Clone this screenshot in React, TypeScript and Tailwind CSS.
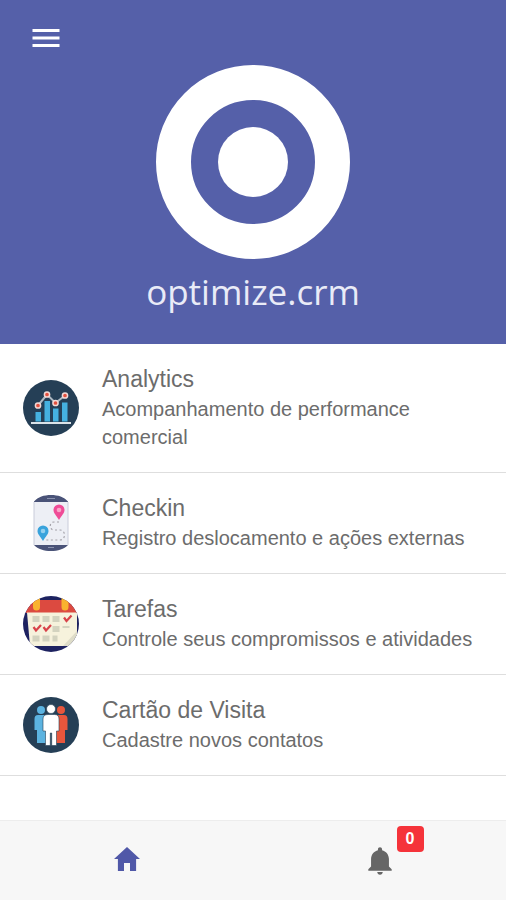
import React from "react";
import { IoMdHome, IoMdMenu, IoMdNotifications } from "react-icons/io";

function TargetLogo() {
  return (
    <svg viewBox="0 0 194 194" className="size-[194px]" aria-hidden="true">
      <circle cx="97" cy="97" r="79.5" fill="none" stroke="#fff" strokeWidth="35" />
      <circle cx="97" cy="97" r="35" fill="#fff" />
    </svg>
  );
}

function AnalyticsIcon() {
  return (
    <svg viewBox="0 0 56 56" className="size-14" aria-hidden="true">
      <circle cx="28" cy="28" r="28" fill="#253f56" />
      <path d="M12.500 32h5.500v9.500h-5.500zM21.500 21h5.500v20.500h-5.500zM30 28.500h5.500v13H30zM39 22.500h5.500v19H39z" fill="#45b1e0" />
      <path d="M8 42h40v2H8z" fill="#dbe3e9" />
      <path d="m15 25.500 9-11 8.500 8.500L42 15.500" fill="none" stroke="#aeb9c3" strokeWidth="2" />
      <g fill="#e2503f" stroke="#f3d9d6" strokeWidth="1.500">
        <circle cx="15" cy="25.500" r="2.600" />
        <circle cx="24" cy="14.500" r="2.600" />
        <circle cx="32.500" cy="23" r="2.600" />
        <circle cx="42" cy="15.500" r="2.600" />
      </g>
    </svg>
  );
}

function CheckinIcon() {
  return (
    <svg viewBox="0 0 56 56" className="size-14" aria-hidden="true">
      <path d="M11 9V6.500C15 2 21 0 28 0s13 2 17 6.500V9zM11 48v2c4 4 10 6 17 6s13-2 17-6v-2z" fill="#4a5378" />
      <path d="M24 3.500h8M25 52.500h6" stroke="#8b93af" strokeWidth="1" />
      <path d="M11 7h34v43H11z" fill="#edeff5" />
      <path d="M11 7v43M45 7v43" stroke="#c9ccda" strokeWidth="1" />
      <path
        d="M36 27h-5c-5 0-5 8 0 8h6c6 0 6 10 0 10H22"
        fill="none"
        stroke="#a3a1a8"
        strokeWidth="1.200"
        strokeDasharray="2 2.500"
      />
      <path d="M36 25c-3-5-5.500-7-5.500-10a5.500 5.500 0 0 1 11 0c0 3-2.500 5-5.500 10z" fill="#ef4c97" />
      <circle cx="36" cy="15" r="2.300" fill="#f9a5c8" />
      <path d="M20 46c-3-5-5.500-7-5.500-10a5.500 5.500 0 0 1 11 0c0 3-2.500 5-5.500 10z" fill="#39a3dc" />
      <circle cx="20" cy="36" r="2.300" fill="#93d0ef" />
    </svg>
  );
}

function TasksIcon() {
  return (
    <svg viewBox="0 0 56 56" className="size-14" aria-hidden="true">
      <clipPath id="tasks-disc">
        <circle cx="28" cy="28" r="28" />
      </clipPath>
      <g clipPath="url(#tasks-disc)">
        <path d="M0 0h56v56H0z" fill="#1d2260" />
        <path d="M4 4h48l3 13H3z" fill="#dc4a40" />
        <path d="M4 16.500h50v22L42 50H7z" fill="#f6f2dc" />
        <path d="M54 35 40 50h14z" fill="#dedcc8" />
        <path d="M10 2h7v9a3.500 3.500 0 0 1-7 0zM38.500 2h7v9a3.500 3.500 0 0 1-7 0z" fill="#f9b32f" />
        <path
          d="M9.500 20h7v6h-7zM19.500 20h7v6h-7zM29.500 20h7v6h-7zM29.500 30h7v6h-7zM39.500 30h7v2h-7zM9.500 39.500h7v6h-7zM19.500 39.500h7v6h-7zM29.500 39.500h5v6h-5z"
          fill="#d3d3bf"
        />
        <path
          d="m10.500 31 2.500 3.500 5-5.500M20.500 31l2.500 3.500 5-5.500M41 21.500l2.500 3.500 5-5.500"
          fill="none"
          stroke="#d8434a"
          strokeWidth="2.200"
        />
      </g>
    </svg>
  );
}

function ContactsIcon() {
  return (
    <svg viewBox="0 0 56 56" className="size-14" aria-hidden="true">
      <circle cx="28" cy="28" r="28" fill="#253f56" />
      <g fill="#5cb3e0">
        <circle cx="18" cy="13" r="4" />
        <path d="M15 18h7q4 0 4 4v24H14V33h-2.500V22q0-4 3.500-4z" />
      </g>
      <g fill="#e8563c">
        <circle cx="38" cy="13" r="4" />
        <path d="M34 18h7q3.500 0 3.500 4v11H42v13H30V22q0-4 4-4z" />
      </g>
      <g fill="#fff" stroke="#253f56" strokeWidth=".6">
        <circle cx="28" cy="12" r="4.500" />
        <path d="M25 17.500h6.500q4.500 0 4.500 4.500v12h-2.500v14.500h-4.800V36h-1.400v12.500h-4.800V34H20V22q0-4.500 5-4.500z" />
      </g>
    </svg>
  );
}

const menuItems = [
  {
    title: "Analytics",
    description: "Acompanhamento de performance comercial",
    icon: <AnalyticsIcon />,
  },
  {
    title: "Checkin",
    description: "Registro deslocamento e ações externas",
    icon: <CheckinIcon />,
  },
  {
    title: "Tarefas",
    description: "Controle seus compromissos e atividades",
    icon: <TasksIcon />,
  },
  {
    title: "Cartão de Visita",
    description: "Cadastre novos contatos",
    icon: <ContactsIcon />,
  },
];

function App() {
  return (
    <div className="flex min-h-screen flex-col bg-white font-['Liberation_Sans',Arial,sans-serif]">
      <header className="bg-[#5560a9] px-7 pt-5 pb-7 text-white">
        <button type="button" aria-label="Menu" className="block cursor-pointer">
          <IoMdMenu className="size-9" />
        </button>
        <div className="mt-[9px] flex flex-col items-center">
          <TargetLogo />
          <h1 className="mt-2 font-['Open_Sans','Noto_Sans',sans-serif] text-[35px] leading-[49px] text-[#e9ebf7]">
            optimize.crm
          </h1>
        </div>
      </header>

      {/* Main menu */}
      <main>
        <ul>
          {menuItems.map((item) => (
            <li key={item.title} className="border-b border-[#dedede]">
              <a href="#" className="flex items-center pr-6 pl-[23px]">
                <span className="shrink-0">{item.icon}</span>
                <span className="ml-[23px] flex-1 pt-[19px] pb-[21px] text-[#6c6c6c]">
                  <span className="block text-[23px] leading-8">{item.title}</span>
                  <span className="block text-xl leading-7">{item.description}</span>
                </span>
              </a>
            </li>
          ))}
        </ul>
      </main>

      {/* Bottom tabs */}
      <nav className="mt-auto flex h-20 border-t border-[#ededed] bg-[#f7f7f7]">
        <a href="#" aria-label="Home" className="flex flex-1 items-center justify-center pb-1 text-[#5058a8]">
          <IoMdHome className="size-8" />
        </a>
        <a href="#" aria-label="Notifications" className="flex flex-1 items-center justify-center text-[#666]">
          <span className="relative">
            <IoMdNotifications className="size-[34px]" />
            <span className="absolute -top-[18px] left-[34px] flex h-[26px] w-[27px] items-center justify-center rounded bg-[#f5333a] text-base font-bold text-white">
              0
            </span>
          </span>
        </a>
      </nav>
    </div>
  );
}

export default App;
